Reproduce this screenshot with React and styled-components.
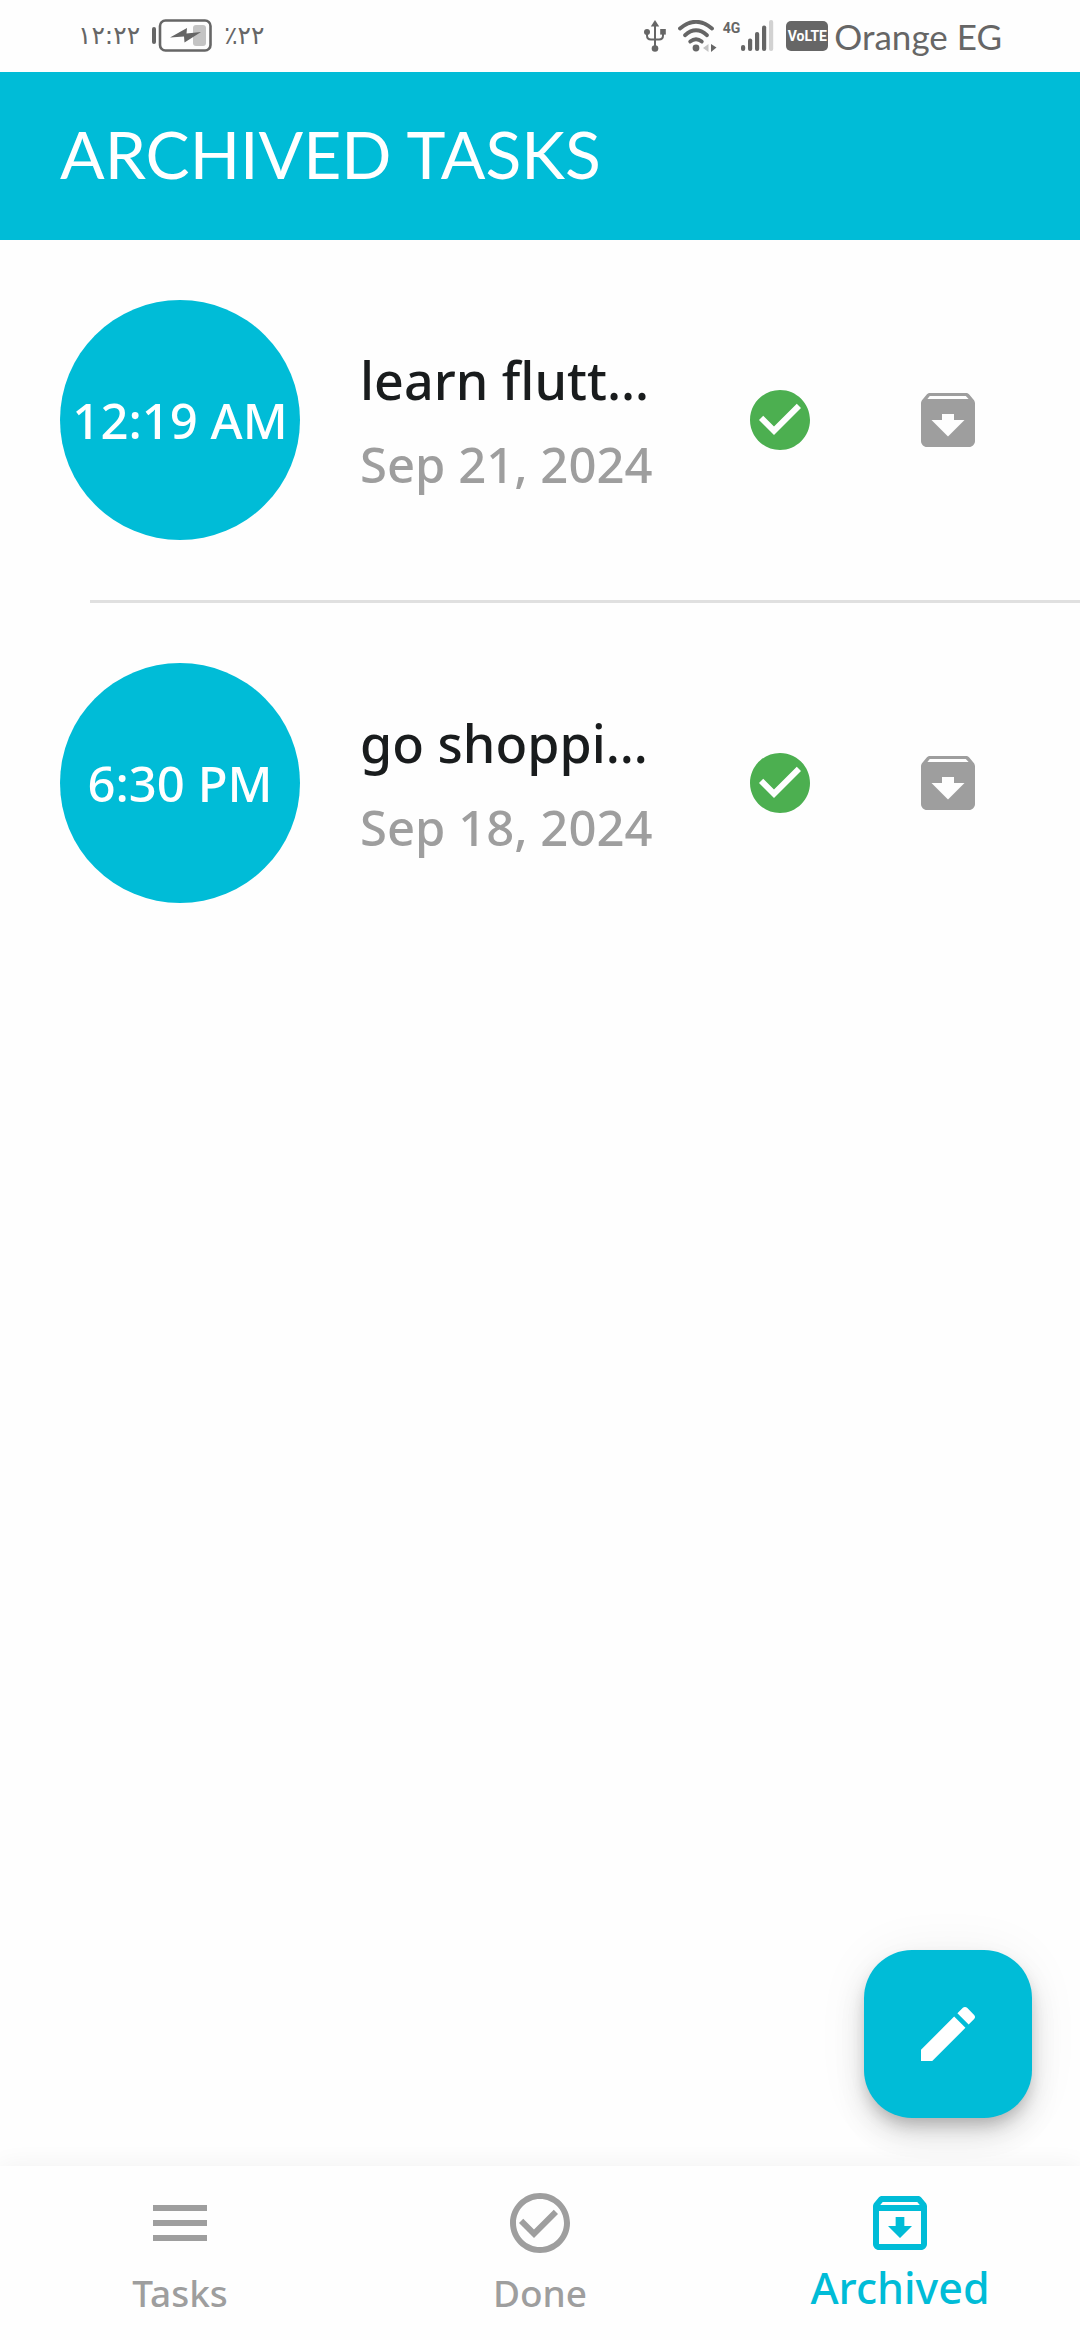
import React from 'react';
import styled, { createGlobalStyle } from 'styled-components';

const cyan = '#00bcd7';
const grey = '#9e9e9e';
const statusInk = '#666666';

const GlobalStyle = createGlobalStyle`
  *, *::before, *::after { box-sizing: border-box; }
  body {
    margin: 0;
    background: #fefefe;
    font-family: 'Noto Sans', 'Open Sans', sans-serif;
  }
  h1, p, ul { margin: 0; padding: 0; }
`;

const Screen = styled.div`
  display: flex;
  flex-direction: column;
  min-height: 100vh;
  background: #fefefe;
`;

const StatusBar = styled.div`
  display: flex;
  align-items: center;
  justify-content: space-between;
  height: 72px;
  padding: 0 78px;
  color: ${statusInk};
`;

const StatusGroup = styled.div`
  display: flex;
  align-items: center;
  gap: ${(p) => p.$gap}px;
`;

const StatusDigits = styled.span`
  font: 400 25px/36px 'DejaVu Sans', sans-serif;
`;

const SignalBlock = styled.span`
  display: flex;
  align-items: flex-start;
`;

const NetworkType = styled.span`
  font: 700 14px/16px Roboto, sans-serif;
`;

const VolteBadge = styled.span`
  display: flex;
  align-items: center;
  justify-content: center;
  width: 42px;
  height: 30px;
  border-radius: 5px;
  background: ${statusInk};
  color: #fefefe;
  font: 700 14px/30px Roboto, sans-serif;
`;

const Carrier = styled.span`
  font: 400 35px/44px Lato, sans-serif;
`;

const AppBar = styled.header`
  display: flex;
  align-items: center;
  height: 168px;
  padding: 0 60px 4px;
  background: ${cyan};
`;

const Title = styled.h1`
  color: #fff;
  font: 400 66px/84px Lato, sans-serif;
`;

const Content = styled.main`
  position: relative;
  flex: 1;
`;

const TaskList = styled.ul`
  list-style: none;
`;

const TaskItem = styled.li`
  display: flex;
  align-items: center;
  padding: 60px;
`;

const Divider = styled.li`
  height: 3px;
  margin-left: 90px;
  background: #e0e0e0;
`;

const TimeCircle = styled.div`
  display: flex;
  flex: none;
  align-items: center;
  justify-content: center;
  width: 240px;
  height: 240px;
  border-radius: 50%;
  background: ${cyan};
  color: #fff;
  font-size: 49px;
  font-weight: 500;
  line-height: 72px;
  white-space: nowrap;
`;

const TaskText = styled.div`
  flex: 1;
  min-width: 0;
  margin-left: 60px;
  padding-top: 4px;
  white-space: nowrap;
`;

const TaskName = styled.p`
  color: #191c1d;
  font-size: 52px;
  font-weight: 500;
  line-height: 72px;
`;

const TaskDate = styled.p`
  margin-top: 12px;
  color: ${grey};
  font-size: 49px;
  font-weight: 500;
  line-height: 72px;
`;

const Actions = styled.div`
  display: flex;
  gap: 24px;
`;

const IconButton = styled.button`
  display: flex;
  align-items: center;
  justify-content: center;
  width: 144px;
  height: 144px;
  padding: 0;
  border: 0;
  border-radius: 50%;
  background: none;
  color: ${(p) => p.$color};
  cursor: pointer;
`;

const Fab = styled.button`
  position: absolute;
  right: 48px;
  bottom: 48px;
  display: flex;
  align-items: center;
  justify-content: center;
  width: 168px;
  height: 168px;
  padding: 0;
  border: 0;
  border-radius: 48px;
  background: ${cyan};
  color: #fff;
  box-shadow: 0 9px 15px -3px rgba(0, 0, 0, 0.2), 0 18px 30px rgba(0, 0, 0, 0.12),
    0 3px 54px rgba(0, 0, 0, 0.06);
  cursor: pointer;
`;

const BottomNav = styled.nav`
  position: relative;
  display: flex;
  height: 174px;
  background: #fefefe;
  box-shadow: 0 0 24px rgba(0, 0, 0, 0.06);
`;

const NavItem = styled.a`
  display: flex;
  flex: 1;
  flex-direction: column;
  align-items: center;
  padding-top: 21px;
  color: ${(p) => (p.$active ? cyan : grey)};
  font-size: ${(p) => (p.$active ? 43 : 37)}px;
  font-weight: 500;
  line-height: ${(p) => (p.$active ? 58 : 68)}px;
  text-decoration: none;
`;

const Svg = styled.svg`
  display: block;
  flex: none;
  fill: currentColor;
`;

const icons = {
  done: 'M12 2C6.48 2 2 6.48 2 12s4.48 10 10 10 10-4.48 10-10S17.52 2 12 2zm-2 15l-5-5 1.41-1.41L10 14.17l7.59-7.59L19 8l-9 9z',
  archive:
    'M20.54 5.23l-1.39-1.68C18.88 3.21 18.47 3 18 3H6c-.47 0-.88.21-1.16.55L3.46 5.23C3.17 5.57 3 6.02 3 6.5V19c0 1.1.9 2 2 2h14c1.1 0 2-.9 2-2V6.5c0-.48-.17-.93-.46-1.27zM12 17.5L6.5 12H10v-2h4v2h3.5L12 17.5zM5.12 5l.81-1h12l.94 1H5.12z',
  edit: 'M3 17.25V21h3.75L17.81 9.94l-3.75-3.75L3 17.25zM20.71 7.04c.39-.39.39-1.02 0-1.41l-2.34-2.34c-.39-.39-1.02-.39-1.41 0l-1.83 1.83 3.75 3.75 1.83-1.83z',
  menu: 'M3 18h18v-2H3v2zm0-5h18v-2H3v2zm0-7v2h18V6H3z',
  doneOutline:
    'M16.59 7.58L10 14.17l-3.59-3.58L5 12l5 5 8-8zM12 2C6.48 2 2 6.48 2 12s4.48 10 10 10 10-4.48 10-10S17.52 2 12 2zm0 18c-4.42 0-8-3.58-8-8s3.58-8 8-8 8 3.58 8 8-3.58 8-8 8z',
  archiveOutline:
    'M20.54 5.23l-1.39-1.68C18.88 3.21 18.47 3 18 3H6c-.47 0-.88.21-1.16.55L3.46 5.23C3.17 5.57 3 6.02 3 6.5V19c0 1.1.9 2 2 2h14c1.1 0 2-.9 2-2V6.5c0-.48-.17-.93-.46-1.27zM6.24 5h11.52l.83 1H5.42l.82-1zM5 19V8h14v11H5zm8.45-9h-2.9v3H8l4 4 4-4h-2.55z',
};

const Icon = ({ name }) => (
  <Svg width="72" height="72" viewBox="0 0 24 24" aria-hidden="true">
    <path d={icons[name]} />
  </Svg>
);

const BatteryIcon = () => (
  <Svg width="60" height="34" viewBox="0 0 60 34" aria-hidden="true">
    <rect x="0" y="8" width="4" height="17" rx="2" />
    <rect x="8" y="1.5" width="50.5" height="30" rx="5.5" fill="none" stroke="currentColor" strokeWidth="2.6" />
    <rect x="41" y="6" width="13" height="21" rx="3" fill="#c4c4c4" />
    <path d="M18 18.5L35 9l-.5 5.5L49 13 32.5 23.5l-.5-6z" />
  </Svg>
);

const UsbIcon = () => (
  <Svg width="22" height="32" viewBox="0 0 22 32" aria-hidden="true">
    <path d="M11 0l4.2 6.5H6.8z" />
    <path d="M11 4v25M3 11v4.5q0 4 4 4h8q4 0 4-4V11" fill="none" stroke="currentColor" strokeWidth="2" />
    <circle cx="3" cy="12" r="3" />
    <rect x="16.2" y="9" width="5.6" height="5.6" />
    <circle cx="11" cy="28.5" r="3.3" />
  </Svg>
);

const WifiIcon = () => (
  <Svg width="39" height="32" viewBox="0 0 39 32" aria-hidden="true">
    <g fill="none" stroke="currentColor" strokeWidth="3.8" strokeLinecap="round">
      <path d="M2 8.5Q18 -5 34 8.5" />
      <path d="M7 15.2Q18 5.5 29 15.2" />
      <path d="M12.2 21.5Q18 17 23.8 21.5" />
    </g>
    <circle cx="18" cy="28" r="3.4" />
    <path d="M30.5 24v8L25 28z" fill="#c4c4c4" />
    <path d="M33 24v8l5.5-4.5z" />
  </Svg>
);

const SignalIcon = () => (
  <Svg width="34" height="32" viewBox="0 0 34 32" aria-hidden="true">
    <rect x="1" y="25" width="4.2" height="6" rx="2" />
    <rect x="8" y="18.5" width="4.2" height="12.5" rx="2" />
    <rect x="15" y="12" width="4.2" height="19" rx="2" />
    <rect x="22" y="5.5" width="4.2" height="25.5" rx="2" />
    <rect x="29" y="0" width="4.2" height="31" rx="2" fill="#d2d2d2" />
  </Svg>
);

const tasks = [
  { time: '12:19 AM', name: 'learn flutt…', date: 'Sep 21, 2024' },
  { time: '6:30 PM', name: 'go shoppi…', date: 'Sep 18, 2024' },
];

export default function App() {
  return (
    <Screen>
      <GlobalStyle />
      <StatusBar>
        <StatusGroup $gap={12}>
          <StatusDigits>١٢:٢٢</StatusDigits>
          <BatteryIcon />
          <StatusDigits>٪٢٢</StatusDigits>
        </StatusGroup>
        <StatusGroup $gap={12}>
          <UsbIcon />
          <StatusGroup $gap={6}>
            <WifiIcon />
            <SignalBlock>
              <NetworkType>4G</NetworkType>
              <SignalIcon />
            </SignalBlock>
          </StatusGroup>
          <StatusGroup $gap={6}>
            <VolteBadge>VoLTE</VolteBadge>
            <Carrier>Orange EG</Carrier>
          </StatusGroup>
        </StatusGroup>
      </StatusBar>
      <AppBar>
        <Title>ARCHIVED TASKS</Title>
      </AppBar>
      <Content>
        <TaskList>
          {tasks.map((task, i) => (
            <React.Fragment key={task.name}>
              {i > 0 && <Divider role="separator" />}
              <TaskItem>
                <TimeCircle>{task.time}</TimeCircle>
                <TaskText>
                  <TaskName>{task.name}</TaskName>
                  <TaskDate>{task.date}</TaskDate>
                </TaskText>
                <Actions>
                  <IconButton type="button" $color="#4caf50">
                    <Icon name="done" />
                  </IconButton>
                  <IconButton type="button" $color={grey}>
                    <Icon name="archive" />
                  </IconButton>
                </Actions>
              </TaskItem>
            </React.Fragment>
          ))}
        </TaskList>
        <Fab type="button">
          <Icon name="edit" />
        </Fab>
      </Content>
      <BottomNav>
        <NavItem href="#tasks">
          <Icon name="menu" />
          Tasks
        </NavItem>
        <NavItem href="#done">
          <Icon name="doneOutline" />
          Done
        </NavItem>
        <NavItem href="#archived" $active aria-current="page">
          <Icon name="archiveOutline" />
          Archived
        </NavItem>
      </BottomNav>
    </Screen>
  );
}
